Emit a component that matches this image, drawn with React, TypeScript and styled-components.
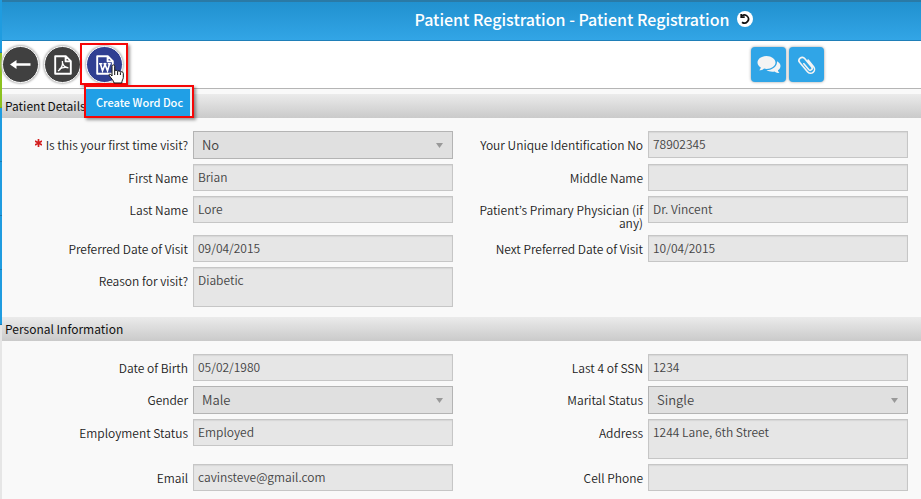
import React from 'react';
import styled, { createGlobalStyle, css } from 'styled-components';

const GlobalStyle = createGlobalStyle`
  *, *::before, *::after { box-sizing: border-box; }
  body {
    margin: 0;
    background: #f9f9f9;
    color: #222;
    font-family: "Noto Sans CJK KR", "Noto Sans", sans-serif;
    font-size: 12px;
  }
  button, input, select, textarea { font: inherit; }
`;

const Page = styled.div`
  display: flex;
  min-height: 100vh;
`;

const Rail = styled.nav`
  flex: none;
  width: 2px;
  display: flex;
  flex-direction: column;
  background: #e6e6e6;
`;

const RailItem = styled.span<{ $size: number; $active?: boolean }>`
  height: ${(p) => p.$size}px;
  background: ${(p) => (p.$active ? '#8cc21f' : '#1f9ce0')};
  border-bottom: 1px solid ${(p) => (p.$active ? '#79ab17' : '#187cb4')};
`;

const Main = styled.main`
  flex: 1;
  min-width: 0;
`;

const Header = styled.header`
  display: flex;
  align-items: center;
  justify-content: center;
  gap: 8px;
  height: 41px;
  padding: 0 0 4px 245px;
  background: linear-gradient(#2191cf, #32a5e6);
  border-top: 2px solid #2a7aa6;
  border-bottom: 1px solid #1f7fb8;
`;

const Title = styled.h1`
  margin: 0;
  color: #fff;
  font-size: 16px;
  line-height: 20px;
  font-weight: 500;
  white-space: nowrap;
`;

const ResetButton = styled.button`
  display: flex;
  width: 16px;
  height: 16px;
  padding: 0;
  border: 0;
  border-radius: 50%;
  background: #fff;
`;

const Toolbar = styled.div`
  display: flex;
  align-items: center;
  justify-content: space-between;
  height: 48px;
  padding: 0 97px 0 0;
  background: #fff;
  border-bottom: 1px solid #b5b5b5;
`;

const Tools = styled.div<{ $gap: number }>`
  display: flex;
  gap: ${(p) => p.$gap}px;
`;

const ToolSlot = styled.div`
  position: relative;
`;

const RoundButton = styled.button<{ $active?: boolean }>`
  display: flex;
  align-items: center;
  justify-content: center;
  width: 37px;
  height: 37px;
  padding: 0;
  border: 1px solid #fff;
  border-radius: 50%;
  background: ${(p) => (p.$active ? '#303f92' : '#404040')};
  box-shadow: 0 0 2px 1px #bbb;
`;

const SquareButton = styled.button`
  display: flex;
  align-items: center;
  justify-content: center;
  width: 35px;
  height: 35px;
  padding: 0;
  border: 0;
  border-radius: 4px;
  background: #30a5e7;
  box-shadow: 0 0 3px #999;
`;

const redFrame = css`
  border: 2px solid #f60606;
  box-shadow: 2px 2px 3px rgba(0, 0, 0, 0.4);
`;

const Highlight = styled.span`
  ${redFrame}
  position: absolute;
  top: -3px;
  left: -6px;
  width: 48px;
  height: 42px;
  pointer-events: none;
`;

const Tooltip = styled.div`
  ${redFrame}
  position: absolute;
  z-index: 2;
  top: 39px;
  left: -2px;
  padding: 2px 2px 0 0;
  background: #eee;
  white-space: nowrap;
`;

const TooltipLabel = styled.span`
  display: block;
  padding: 0 7px 0 10px;
  background: #209fe6;
  color: #fff;
  font-size: 11px;
  font-weight: 500;
  line-height: 27px;
`;

const Pointer = styled.svg`
  position: absolute;
  z-index: 3;
  top: 18px;
  left: 22px;
`;

const SectionTitle = styled.h2`
  margin: 0;
  padding: 0 3px;
  background: linear-gradient(#ebebeb, #cacaca);
  color: #111;
  font-size: 12px;
  font-weight: 400;
  line-height: 24px;
`;

const Form = styled.form`
  padding-top: 5px;
`;

const Rows = styled.div`
  display: flex;
  flex-direction: column;
  gap: 5px;
  padding: 13px 13px 10px 16px;
`;

const Row = styled.div`
  display: grid;
  grid-template-columns: repeat(2, minmax(0, 1fr));
  column-gap: 20px;
`;

const Field = styled.div`
  display: grid;
  grid-template-columns: minmax(0, 17fr) minmax(0, 26fr);
  column-gap: 5px;
  align-items: start;
`;

const Label = styled.label`
  padding: 7px 0 1px;
  font-weight: 350;
  line-height: 13px;
  text-align: right;
`;

const Required = styled.svg`
  margin-right: 4px;
  vertical-align: 3px;
`;

const boxed = css`
  display: block;
  width: 100%;
  margin: 0;
  padding: 0 4px 2px;
  border: 1px solid #c6c6c6;
  border-radius: 0;
  background: #e6e6e6;
  box-shadow: inset 0 1px 1px #d6d6d6;
  color: #444;
  font-weight: 350;
  outline: 0;
`;

const Input = styled.input`
  ${boxed}
  height: 27px;
`;

const TextArea = styled.textarea`
  ${boxed}
  height: 40px;
  padding-top: 5px;
  line-height: 14px;
  resize: none;
  overflow: hidden;
`;

const SelectWrap = styled.div`
  position: relative;
`;

const Select = styled.select`
  ${boxed}
  height: 28px;
  padding: 0 8px 2px;
  border-color: #b4b4b4;
  background: #e0e0e0;
  box-shadow: none;
  appearance: none;
  font-size: 13px;
`;

const Caret = styled.svg`
  position: absolute;
  top: 12px;
  right: 10px;
  pointer-events: none;
`;

type FieldData = {
  id: string;
  label: string;
  value: string;
  kind?: 'select' | 'area';
  required?: boolean;
};

const details: FieldData[][] = [
  [
    { id: 'first-visit', label: 'Is this your first time visit?', value: 'No', kind: 'select', required: true },
    { id: 'uid', label: 'Your Unique Identification No', value: '78902345' },
  ],
  [
    { id: 'first-name', label: 'First Name', value: 'Brian' },
    { id: 'middle-name', label: 'Middle Name', value: '' },
  ],
  [
    { id: 'last-name', label: 'Last Name', value: 'Lore' },
    { id: 'physician', label: 'Patient\u2019s Primary Physician (if any)', value: 'Dr. Vincent' },
  ],
  [
    { id: 'visit-date', label: 'Preferred Date of Visit', value: '09/04/2015' },
    { id: 'next-date', label: 'Next Preferred Date of Visit', value: '10/04/2015' },
  ],
  [{ id: 'reason', label: 'Reason for visit?', value: 'Diabetic', kind: 'area' }],
];

const personal: FieldData[][] = [
  [
    { id: 'dob', label: 'Date of Birth', value: '05/02/1980' },
    { id: 'ssn', label: 'Last 4 of SSN', value: '1234' },
  ],
  [
    { id: 'gender', label: 'Gender', value: 'Male', kind: 'select' },
    { id: 'marital', label: 'Marital Status', value: 'Single', kind: 'select' },
  ],
  [
    { id: 'employment', label: 'Employment Status', value: 'Employed' },
    { id: 'address', label: 'Address', value: '1244 Lane, 6th Street', kind: 'area' },
  ],
  [
    { id: 'email', label: 'Email', value: 'cavinsteve@gmail.com' },
    { id: 'phone', label: 'Cell Phone', value: '' },
  ],
];

function Control({ field }: { field: FieldData }) {
  if (field.kind === 'select') {
    return (
      <SelectWrap>
        <Select id={field.id} defaultValue={field.value}>
          <option>{field.value}</option>
        </Select>
        <Caret width="7" height="5" viewBox="0 0 7 5" aria-hidden="true">
          <path d="M0 0h7L3.5 5z" fill="#999" />
        </Caret>
      </SelectWrap>
    );
  }
  if (field.kind === 'area') return <TextArea id={field.id} defaultValue={field.value} readOnly />;
  return <Input id={field.id} defaultValue={field.value} readOnly />;
}

function Section({ title, rows }: { title: string; rows: FieldData[][] }) {
  return (
    <section>
      <SectionTitle>{title}</SectionTitle>
      <Rows>
        {rows.map((row) => (
          <Row key={row[0].id}>
            {row.map((field) => (
              <Field key={field.id}>
                <Label htmlFor={field.id}>
                  {field.required && (
                    <Required width="7" height="8" viewBox="0 0 7 8" aria-label="Required">
                      <path d="M3.5 0v8M0 2l7 4M7 2L0 6" stroke="#d32020" strokeWidth="1.7" />
                    </Required>
                  )}
                  {field.label}
                </Label>
                <Control field={field} />
              </Field>
            ))}
          </Row>
        ))}
      </Rows>
    </section>
  );
}

const SheetOutline = () => (
  <path d="M1.2 1.2h10.6l5 5v12.6H1.2zM11.6 1.4v5h5" fill="none" stroke="#fff" strokeWidth="1.9" strokeLinejoin="round" />
);

export default function App() {
  return (
    <>
      <GlobalStyle />
      <Page>
        <Rail aria-label="Sections">
          <RailItem $size={53} />
          <RailItem $size={55} $active />
          <RailItem $size={54} />
          <RailItem $size={54} />
          <RailItem $size={54} />
          <RailItem $size={55} />
        </Rail>
        <Main>
          <Header>
            <Title>Patient Registration - Patient Registration</Title>
            <ResetButton type="button" aria-label="Reset">
              <svg width="16" height="16" viewBox="0 0 16 16" fill="none" stroke="#111" strokeWidth="1.7">
                <path d="M4.9 4.9A4 4 0 1 1 5 11.2" />
                <path d="M4.2 2.9v3.2h3.5" />
              </svg>
            </ResetButton>
          </Header>
          <Toolbar>
            <Tools $gap={5}>
              <RoundButton type="button" aria-label="Back">
                <svg width="21" height="11" viewBox="0 0 21 11">
                  <path d="M0 5.5l6.500-4.500v3.200h14v2.600h-14V10z" fill="#fff" />
                </svg>
              </RoundButton>
              <RoundButton type="button" aria-label="Create PDF">
                <svg width="18" height="20" viewBox="0 0 18 20">
                  <SheetOutline />
                  <path d="M4 16c3-2 5-6 4.400-10M8.400 7.500c.6 3 2.600 5 6 5.300-3-.7-6.500-.2-9.400 1.500" fill="none" stroke="#fff" strokeWidth="1.3" />
                </svg>
              </RoundButton>
              <ToolSlot>
                <RoundButton type="button" aria-label="Create Word Doc" aria-describedby="word-tip" $active>
                  <svg width="18" height="20" viewBox="0 0 18 20">
                    <SheetOutline />
                    <path d="M3 8.800h3.400M7.500 8.800h3M11.800 8.800h3M4.500 9l2 6.800L9 9.500l2.500 6.300L13.500 9" fill="none" stroke="#fff" strokeWidth="1.6" />
                  </svg>
                </RoundButton>
                <Highlight />
                <Tooltip role="tooltip" id="word-tip">
                  <TooltipLabel>Create Word Doc</TooltipLabel>
                </Tooltip>
                <Pointer width="17" height="20" viewBox="0 0 17 20" aria-hidden="true">
                  <path
                    d="M4 12V2.200C4 .4 6.700.4 6.700 2.200V7c.3-1 2.700-.9 2.900.4.500-.9 2.700-.6 2.800.7.700-.7 2.900-.4 2.900 1.200v4.200c0 1.800-1.500 2.600-1.500 5.500H6c-.2-2.200-2.400-4-4.600-7.200C.3 10 2.200 9.200 4 12z"
                    fill="#fff"
                    stroke="#111"
                  />
                  <path d="M6.700 7v4M9.600 7.500V11M12.400 8.500V11" stroke="#111" />
                </Pointer>
              </ToolSlot>
            </Tools>
            <Tools $gap={3}>
              <SquareButton type="button" aria-label="Comments">
                <svg width="24" height="20" viewBox="0 0 24 20" fill="#f4f4f4">
                  <path d="M9.500 1C4.500 1 .5 4 .5 7.500c0 2 1.300 3.800 3.300 5-.2 1.200-.8 2-1.700 2.800 2 0 3.700-.6 5-1.700.8.200 1.600.3 2.400.3 5 0 9-2.900 9-6.400S14.500 1 9.500 1z" />
                  <path d="M20 6.300c2 1 3.500 2.700 3.500 4.700 0 1.800-1 3.200-2.600 4.300.2 1.200.8 2 1.600 2.700-1.900 0-3.600-.5-4.900-1.500-2.900.6-6.200 0-8.100-1.400C15.500 15.200 20.500 11.500 20 6.300z" />
                </svg>
              </SquareButton>
              <SquareButton type="button" aria-label="Attachments">
                <svg width="24" height="24" viewBox="0 0 24 24" fill="none" stroke="#f4f4f4" strokeWidth="1.6" strokeLinecap="round">
                  <path
                    d="M16 9v8.500a4 4 0 0 1-8 0V5.500a3.200 3.200 0 0 1 6.400 0V16.500a2 2 0 0 1-4 0V9"
                    transform="rotate(-40 12 12)"
                  />
                </svg>
              </SquareButton>
            </Tools>
          </Toolbar>
          <Form>
            <Section title="Patient Details" rows={details} />
            <Section title="Personal Information" rows={personal} />
          </Form>
        </Main>
      </Page>
    </>
  );
}
